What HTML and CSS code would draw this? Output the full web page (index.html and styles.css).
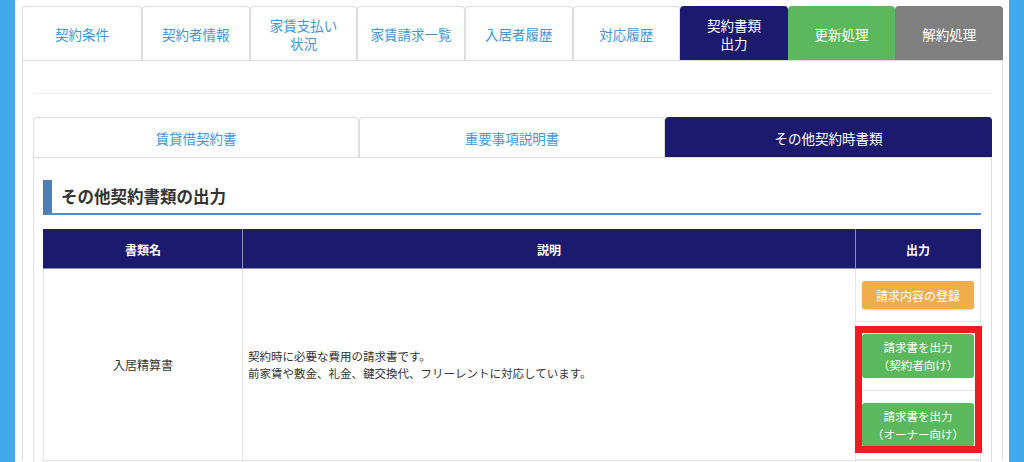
FILE: index.html
```html
<!DOCTYPE html>
<html lang="ja">
<head>
    <meta charset="UTF-8">
    <title>契約書類出力</title>
    <link rel="stylesheet" href="styles.css">
</head>
<body>
    <div class="page">
        <ul class="main-tabs">
            <li>契約条件</li>
            <li>契約者情報</li>
            <li>家賃支払い<br>状況</li>
            <li>家賃請求一覧</li>
            <li>入居者履歴</li>
            <li>対応履歴</li>
            <li class="active">契約書類<br>出力</li>
            <li class="renew">更新処理</li>
            <li class="cancel">解約処理</li>
        </ul>

        <div class="main-panel">
            <hr class="divider">

            <ul class="sub-tabs">
                <li>賃貸借契約書</li>
                <li>重要事項説明書</li>
                <li class="active">その他契約時書類</li>
            </ul>

            <div class="sub-panel">
                <h3 class="section-title">その他契約書類の出力</h3>

                <table class="doc-table">
                    <thead>
                        <tr>
                            <th class="col-name">書類名</th>
                            <th class="col-desc">説明</th>
                            <th class="col-out">出力</th>
                        </tr>
                    </thead>
                    <tbody>
                        <tr>
                            <td class="doc-name">入居精算書</td>
                            <td class="doc-desc">契約時に必要な費用の請求書です。<br>前家賃や敷金、礼金、鍵交換代、フリーレントに対応しています。</td>
                            <td class="doc-out">
                                <div class="out-list">
                                    <div class="out-row"><button class="btn btn-orange">請求内容の登録</button></div>
                                    <div class="out-row"><button class="btn btn-green">請求書を出力<br>（契約者向け）</button></div>
                                    <div class="out-row"><button class="btn btn-green">請求書を出力<br>（オーナー向け）</button></div>
                                    <div class="highlight"></div>
                                </div>
                            </td>
                        </tr>
                        <tr class="next-row">
                            <td></td>
                            <td></td>
                            <td></td>
                        </tr>
                    </tbody>
                </table>
            </div>
        </div>
    </div>
</body>
</html>
```

FILE: styles.css
```css
* {
    box-sizing: border-box;
}

body {
    margin: 0;
    background: #41a8ec;
    font-family: "Noto Sans CJK JP", "Noto Sans", sans-serif;
    color: #333;
}

.page {
    margin: 0 15px;
    height: 462px;
    overflow: hidden;
    background: #fff;
    padding: 6px 6px 0 7px;
}

/* 上部タブ */
.main-tabs {
    display: grid;
    grid-template-columns: 120px repeat(8, 1fr);
    height: 54px;
    list-style: none;
    margin: 0;
    padding: 0;
}

.main-tabs li {
    display: flex;
    align-items: center;
    justify-content: center;
    text-align: center;
    border: 1px solid #ddd;
    border-bottom: none;
    border-radius: 4px 4px 0 0;
    font-size: 13.5px;
    line-height: 18px;
    color: #4596d8;
    background: #fff;
}

.main-tabs li.active {
    background: #1b1a6e;
    border-color: #1b1a6e;
    color: #fff;
}

.main-tabs li.renew {
    background: #5cb85c;
    border-color: #5cb85c;
    color: #fff;
}

.main-tabs li.cancel {
    background: #808080;
    border-color: #808080;
    color: #fff;
}

.main-panel {
    border: 1px solid #ddd;
    border-bottom: none;
    padding: 0 10px;
    height: 400px;
}

.divider {
    margin: 32px 0 23px;
    border: none;
    border-top: 1px solid #eee;
}

/* 書類タブ */
.sub-tabs {
    display: grid;
    grid-template-columns: 326px 306px 1fr;
    height: 40px;
    list-style: none;
    margin: 0;
    padding: 0;
}

.sub-tabs li {
    display: flex;
    align-items: center;
    justify-content: center;
    border: 1px solid #ddd;
    border-bottom: none;
    border-radius: 4px 4px 0 0;
    font-size: 13.5px;
    color: #4596d8;
}

.sub-tabs li.active {
    background: #1b1a6e;
    border-color: #1b1a6e;
    color: #fff;
}

.sub-panel {
    border: 1px solid #ddd;
    border-bottom: none;
    padding: 22px 10px 0 9px;
    height: 320px;
}

.section-title {
    margin: 0;
    height: 35px;
    line-height: 33px;
    padding-left: 9px;
    border-left: 9px solid #4a80b6;
    border-bottom: 2px solid #4a8fd0;
    font-size: 16.5px;
    font-weight: bold;
    color: #333;
}

/* 書類テーブル */
.doc-table {
    width: 100%;
    margin-top: 14px;
    border-collapse: collapse;
    table-layout: fixed;
}

.doc-table th {
    height: 39px;
    background: #1b1a6e;
    color: #fff;
    font-size: 12px;
    font-weight: bold;
    border: 1px solid #8e8db5;
    border-top-color: #1b1a6e;
}

.doc-table th:first-child { border-left-color: #1b1a6e; }
.doc-table th:last-child { border-right-color: #1b1a6e; }

.col-name { width: 199px; }
.col-out { width: 125px; }

.doc-table td {
    border: 1px solid #e6e6e6;
    vertical-align: middle;
    font-size: 12px;
}

.doc-name {
    text-align: center;
}

.doc-table .doc-desc {
    padding-left: 5px;
    font-size: 11.5px;
    line-height: 17px;
}

.doc-out {
    padding: 0;
}

.out-list {
    position: relative;
}

.out-row {
    padding: 12px 6px;
    border-bottom: 1px solid #e6e6e6;
}

.out-row:last-of-type {
    border-bottom: none;
}

.btn {
    display: block;
    width: 100%;
    border: none;
    border-radius: 3px;
    color: #fff;
    font-family: inherit;
    font-size: 12px;
    cursor: pointer;
}

.btn-orange {
    height: 28px;
    background: #f0ad4e;
    box-shadow: 0 1px 2px rgba(0, 0, 0, 0.2);
}

.btn-green {
    height: 44px;
    background: #5cb85c;
    font-size: 11.5px;
    line-height: 18px;
}

/* 赤枠 */
.highlight {
    position: absolute;
    top: 57px;
    left: -1px;
    width: 127px;
    height: 127px;
    border: 7px solid #ec1c24;
}

.next-row td {
    height: 40px;
}
```
